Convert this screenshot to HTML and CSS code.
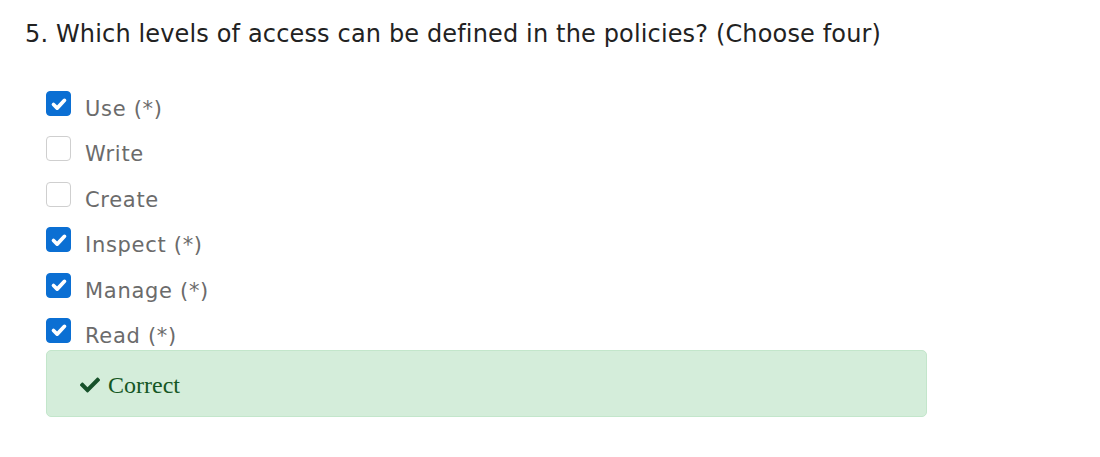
FILE: index.html
```html
<!DOCTYPE html>
<html>
<head>
<meta charset="utf-8">
<link rel="stylesheet" href="styles.css">
</head>
<body>
<div class="question">
  <h2 class="q-title">5. Which levels of access can be defined in the policies? (Choose four)</h2>
  <ul class="options">
    <li class="option"><span class="box checked"><svg viewBox="0 0 24 24" class="tick"><path d="M6 12.5l4 4 8-8.5"/></svg></span><span class="label">Use (*)</span></li>
    <li class="option"><span class="box"></span><span class="label">Write</span></li>
    <li class="option"><span class="box"></span><span class="label">Create</span></li>
    <li class="option"><span class="box checked"><svg viewBox="0 0 24 24" class="tick"><path d="M6 12.5l4 4 8-8.5"/></svg></span><span class="label">Inspect (*)</span></li>
    <li class="option"><span class="box checked"><svg viewBox="0 0 24 24" class="tick"><path d="M6 12.5l4 4 8-8.5"/></svg></span><span class="label">Manage (*)</span></li>
    <li class="option"><span class="box checked"><svg viewBox="0 0 24 24" class="tick"><path d="M6 12.5l4 4 8-8.5"/></svg></span><span class="label">Read (*)</span></li>
  </ul>
  <div class="alert">
    <svg class="alert-icon" viewBox="0 0 512 512"><path d="M173.9 439.4l-166.4-166.4c-10-10-10-26.2 0-36.2l36.2-36.2c10-10 26.2-10 36.2 0L192 312.7 432.1 72.6c10-10 26.2-10 36.2 0l36.2 36.2c10 10 10 26.2 0 36.2l-294.4 294.4c-10 10-26.2 10-36.2 0z"/></svg>
    <span class="alert-text">Correct</span>
  </div>
</div>
</body>
</html>
```

FILE: styles.css
```css
html, body {
  margin: 0;
  padding: 0;
  background: #ffffff;
}

.question {
  padding: 18px 0 0 25px;
  width: 902px;
  font-family: "DejaVu Sans", Verdana, sans-serif;
}

.q-title {
  margin: 0;
  font-weight: normal;
  font-size: 24px;
  letter-spacing: 0.15px;
  line-height: 32px;
  color: #222222;
}

.options {
  list-style: none;
  margin: 0;
  padding: 41px 0 0 21px;
  display: flex;
  flex-direction: column;
  gap: 20.4px;
}

.option {
  display: flex;
  align-items: center;
  height: 25px;
  gap: 14px;
}

.box {
  width: 25px;
  height: 25px;
  box-sizing: border-box;
  border: 1px solid #cfcfcf;
  border-radius: 4px;
  background: #fff;
  display: flex;
  align-items: center;
  justify-content: center;
  flex: none;
}

.box.checked {
  background: #0b6fd3;
  border-color: #0b6fd3;
}

.tick {
  width: 22px;
  height: 22px;
  fill: none;
  stroke: #ffffff;
  stroke-width: 4;
  stroke-linecap: round;
  stroke-linejoin: round;
}

.label {
  font-size: 21px;
  letter-spacing: 0.7px;
  color: #6b6b6b;
  line-height: 25px;
  position: relative;
  top: 6px;
}

.alert {
  margin: 7px 0 0 21px;
  height: 67px;
  box-sizing: border-box;
  background: #d4edda;
  border: 1px solid #c3e6cb;
  border-radius: 5px;
  display: flex;
  align-items: center;
  padding: 4px 0 0 33px;
  gap: 8px;
}

.alert-icon {
  width: 20px;
  height: 20px;
  fill: #17512a;
}

.alert-text {
  font-family: "Liberation Serif", "Times New Roman", serif;
  font-size: 24px;
  color: #155724;
}
```
